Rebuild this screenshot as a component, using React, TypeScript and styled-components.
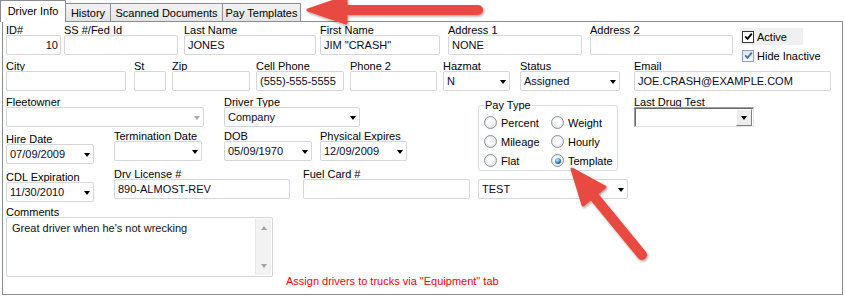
import React from 'react';
import styled, { createGlobalStyle } from 'styled-components';

const GlobalStyle = createGlobalStyle`
  html, body {
    margin: 0;
    padding: 0;
    background: #fff;
  }
  body {
    font-family: "Liberation Sans", Arial, sans-serif;
    font-size: 11px;
    color: #000;
  }
`;

const Screen = styled.div`
  position: relative;
  width: 845px;
  height: 297px;
  overflow: hidden;
  background: #fff;
`;

const TabStrip = styled.div`
  display: flex;
  align-items: flex-end;
  height: 21px;
`;

const Tab = styled.div<{ $active?: boolean; $w: number }>`
  box-sizing: border-box;
  flex: none;
  width: ${(p) => p.$w}px;
  height: ${(p) => (p.$active ? 22 : 18)}px;
  margin-left: ${(p) => (p.$active ? 0 : -1)}px;
  margin-bottom: ${(p) => (p.$active ? -1 : 0)}px;
  position: relative;
  z-index: ${(p) => (p.$active ? 2 : 1)};
  border: 1px solid #898c95;
  border-bottom: none;
  background: ${(p) => (p.$active ? '#fff' : 'linear-gradient(#f3f3f3, #e4e4e4)')};
  display: flex;
  align-items: center;
  justify-content: center;
  padding-bottom: ${(p) => (p.$active ? 2 : 0)}px;
  white-space: nowrap;
`;

const Panel = styled.div`
  box-sizing: border-box;
  margin-left: 2px;
  width: 841px;
  height: 274px;
  border: 1px solid #898c95;
  padding: 1px 0 0 3px;
  display: flex;
  flex-direction: column;
`;

const Row = styled.div<{ $mt?: number; $h?: number }>`
  display: flex;
  align-items: flex-start;
  margin-top: ${(p) => p.$mt ?? 0}px;
  ${(p) => (p.$h ? `height: ${p.$h}px;` : '')}
`;

const Field = styled.div<{ $w: number; $ml: number; $mt: number }>`
  display: flex;
  flex-direction: column;
  flex: none;
  width: ${(p) => p.$w}px;
  margin-left: ${(p) => p.$ml}px;
  margin-top: ${(p) => p.$mt}px;
`;

const Label = styled.div`
  height: 12px;
  line-height: 14px;
  white-space: nowrap;
`;

const Box = styled.div<{ $h?: number }>`
  box-sizing: border-box;
  height: ${(p) => p.$h ?? 20}px;
  border: 1px solid #d3d6da;
  border-radius: 2px;
  background: #fff;
  display: flex;
  align-items: center;
  padding: 0 3px;
  white-space: nowrap;
  overflow: hidden;
`;

const Value = styled.span<{ $right?: boolean }>`
  flex: 1;
  text-align: ${(p) => (p.$right ? 'right' : 'left')};
  color: #0a0a1e;
  margin-right: ${(p) => (p.$right ? -1 : 0)}px;
`;

const Caret = styled.span<{ $disabled?: boolean }>`
  flex: none;
  width: 0;
  height: 0;
  border-left: 3.5px solid transparent;
  border-right: 3.5px solid transparent;
  border-top: 4px solid ${(p) => (p.$disabled ? '#a8a8a8' : '#000')};
  margin-top: 1px;
`;

const CheckStack = styled.div`
  flex: none;
  margin: 5px 0 0 7px;
  display: flex;
  flex-direction: column;
  gap: 2px;
`;

const CheckRow = styled.div<{ $shaded?: boolean }>`
  width: 63px;
  height: 17px;
  display: flex;
  align-items: center;
  gap: 3px;
  padding-left: 2px;
  box-sizing: border-box;
  background: ${(p) => (p.$shaded ? '#f0f0f0' : 'transparent')};
  white-space: nowrap;
`;

const CheckBox = styled.span<{ $soft?: boolean }>`
  box-sizing: border-box;
  width: 12px;
  height: 12px;
  flex: none;
  border: 1px solid ${(p) => (p.$soft ? '#8f9fb6' : '#333')};
  background: ${(p) => (p.$soft ? 'linear-gradient(#dfe6ef, #f4f7fb)' : '#fff')};
  display: flex;
  align-items: center;
  justify-content: center;
`;

const Middle = styled.div`
  display: flex;
  margin-top: 4px;
`;

const LeftCol = styled.div`
  flex: none;
  width: 472px;
  display: flex;
  flex-direction: column;
`;

const PayCol = styled.div`
  flex: none;
  width: 150px;
  display: flex;
  flex-direction: column;
`;

const GroupBox = styled.fieldset`
  box-sizing: border-box;
  width: 140px;
  margin: 4px 0 0;
  padding: 2px 0 0 5px;
  min-width: 0;
  border: 1px solid #d5dce3;
  border-radius: 3px;
`;

const Legend = styled.legend`
  padding: 0 1px;
  margin: 0;
  line-height: 12px;
  font-size: 11px;
`;

const RadioGrid = styled.div`
  display: grid;
  grid-template-columns: 67px auto;
  grid-auto-rows: 19px;
`;

const RadioItem = styled.div`
  display: flex;
  align-items: center;
  gap: 4px;
  white-space: nowrap;
`;

const RadioDot = styled.span<{ $on?: boolean }>`
  box-sizing: border-box;
  width: 13px;
  height: 13px;
  flex: none;
  border-radius: 50%;
  border: 1px solid #8d9095;
  background: radial-gradient(circle at 50% 45%, #fbfbfb 0 35%, #d4d6d9 100%);
  display: flex;
  align-items: center;
  justify-content: center;

  &::after {
    content: '';
    display: ${(p) => (p.$on ? 'block' : 'none')};
    width: 6px;
    height: 6px;
    border-radius: 50%;
    background: radial-gradient(circle at 40% 35%, #a6e0ff 0 15%, #1f73bb 55%, #0c3b6b 100%);
  }
`;

const DrugCol = styled.div`
  flex: none;
  margin-left: 6px;
  display: flex;
  flex-direction: column;
  width: 120px;
`;

const ClassicCombo = styled.div`
  box-sizing: border-box;
  height: 20px;
  border: 1px solid;
  border-color: #a0a0a0 #e3e3e3 #e3e3e3 #a0a0a0;
  box-shadow: inset 1px 1px 0 #696969;
  background: #fff;
  display: flex;
  justify-content: flex-end;
  padding: 1px 1px 0 0;
`;

const ComboButton = styled.div`
  box-sizing: border-box;
  width: 16px;
  height: 17px;
  border: 1px solid;
  border-color: #fff #808080 #808080 #fff;
  background: #ececec;
  display: flex;
  align-items: center;
  justify-content: center;
`;

const Memo = styled(Box)`
  align-items: stretch;
  padding: 0 0 0 5px;
`;

const MemoText = styled.div`
  flex: 1;
  padding-top: 3px;
  line-height: 14px;
  color: #111;
`;

const ScrollTrack = styled.div`
  width: 16px;
  margin: 1px 1px 1px 0;
  background: #f2f2f2;
  border-left: 1px solid #e8e8e8;
  display: flex;
  flex-direction: column;
  align-items: center;
  justify-content: space-between;
  padding: 7px 0 7px;
  box-sizing: border-box;
`;

const ScrollArrow = styled.span<{ $up?: boolean }>`
  width: 0;
  height: 0;
  border-left: 3.5px solid transparent;
  border-right: 3.5px solid transparent;
  ${(p) => (p.$up ? 'border-bottom' : 'border-top')}: 4px solid #a3a3a3;
`;

const Note = styled.div`
  margin: 70px 0 0 13px;
  line-height: 12px;
  color: #ff0000;
  white-space: nowrap;
`;

const Overlay = styled.svg`
  position: absolute;
  left: 0;
  top: 0;
  pointer-events: none;
`;

type FieldProps = {
  label: string;
  w: number;
  ml?: number;
  mt?: number;
  value?: string;
  right?: boolean;
  select?: boolean;
  disabled?: boolean;
};

function Input({ label, w, ml = 0, mt = 0, value, right, select, disabled }: FieldProps) {
  return (
    <Field $w={w} $ml={ml} $mt={mt}>
      <Label>{label}</Label>
      <Box>
        <Value $right={right}>{value}</Value>
        {select && <Caret $disabled={disabled} />}
      </Box>
    </Field>
  );
}

function Tick({ color }: { color: string }) {
  return (
    <svg width="9" height="9" viewBox="0 0 9 9">
      <path d="M1.2 4.4 L3.5 6.8 L7.8 1.6" fill="none" stroke={color} strokeWidth="1.8" />
    </svg>
  );
}

const payTypes: [string, boolean][] = [
  ['Percent', false],
  ['Weight', false],
  ['Mileage', false],
  ['Hourly', false],
  ['Flat', false],
  ['Template', true],
];

export default function App() {
  return (
    <>
      <GlobalStyle />
      <Screen>
        <TabStrip>
          <Tab $active $w={66}>Driver Info</Tab>
          <Tab $w={46}>History</Tab>
          <Tab $w={113}>Scanned Documents</Tab>
          <Tab $w={79}>Pay Templates</Tab>
        </TabStrip>
        <Panel>
          <Row $h={32}>
            <Input label="ID#" w={55} value="10" right />
            <Input label="SS #/Fed Id" w={114} ml={3} />
            <Input label="Last Name" w={132} ml={6} value="JONES" />
            <Input label="First Name" w={120} ml={4} value={'JIM "CRASH"'} />
            <Input label="Address 1" w={134} ml={8} value="NONE" />
            <Input label="Address 2" w={143} ml={8} />
            <CheckStack>
              <CheckRow $shaded>
                <CheckBox>
                  <Tick color="#000" />
                </CheckBox>
                Active
              </CheckRow>
              <CheckRow>
                <CheckBox $soft>
                  <Tick color="#4c6fa8" />
                </CheckBox>
                Hide Inactive
              </CheckRow>
            </CheckStack>
          </Row>
          <Row $mt={4}>
            <Input label="City" w={120} />
            <Input label="St" w={32} ml={8} />
            <Input label="Zip" w={78} ml={6} />
            <Input label="Cell Phone" w={88} ml={6} value="(555)-555-5555" />
            <Input label="Phone 2" w={87} ml={6} />
            <Input label="Hazmat" w={67} ml={6} value="N" select />
            <Input label="Status" w={100} ml={10} value="Assigned" select />
            <Input label="Email" w={197} ml={14} value="JOE.CRASH@EXAMPLE.COM" />
          </Row>
          <Middle>
            <LeftCol>
              <Row>
                <Input label="Fleetowner" w={198} select disabled />
                <Input label="Driver Type" w={136} ml={20} value="Company" select />
              </Row>
              <Row $mt={2}>
                <Input label="Hire Date" w={88} mt={3} value="07/09/2009" select />
                <Input label="Termination Date" w={88} ml={20} select />
                <Input label="DOB" w={88} ml={22} value="05/09/1970" select />
                <Input label="Physical Expires" w={87} ml={8} value="12/09/2009" select />
              </Row>
              <Row $mt={3}>
                <Input label="CDL Expiration" w={88} mt={3} value="11/30/2010" select />
                <Input label="Drv License #" w={176} ml={20} value="890-ALMOST-REV" />
                <Input label="Fuel Card #" w={167} ml={13} />
              </Row>
            </LeftCol>
            <PayCol>
              <GroupBox>
                <Legend>Pay Type</Legend>
                <RadioGrid>
                  {payTypes.map(([name, on]) => (
                    <RadioItem key={name}>
                      <RadioDot $on={on} />
                      {name}
                    </RadioItem>
                  ))}
                </RadioGrid>
              </GroupBox>
              <Field $w={150} $ml={0} $mt={8}>
                <Box>
                  <Value>TEST</Value>
                  <Caret />
                </Box>
              </Field>
            </PayCol>
            <DrugCol>
              <Label>Last Drug Test</Label>
              <ClassicCombo>
                <ComboButton>
                  <Caret />
                </ComboButton>
              </ClassicCombo>
            </DrugCol>
          </Middle>
          <Row $mt={3}>
            <Field $w={267} $ml={0} $mt={0}>
              <Label>Comments</Label>
              <Memo $h={60}>
                <MemoText>Great driver when he's not wrecking</MemoText>
                <ScrollTrack>
                  <ScrollArrow $up />
                  <ScrollArrow />
                </ScrollTrack>
              </Memo>
            </Field>
            <Note>Assign drivers to trucks via "Equipment" tab</Note>
          </Row>
        </Panel>
        <Overlay width="845" height="297" viewBox="0 0 845 297">
          <defs>
            <filter id="arrowShadow" x="-20%" y="-40%" width="140%" height="180%">
              <feDropShadow dx="1" dy="1.5" stdDeviation="1.2" floodColor="#000" floodOpacity="0.35" />
            </filter>
          </defs>
          <g filter="url(#arrowShadow)" fill="#e8493f" stroke="#e8493f" strokeLinejoin="round">
            <line x1="478" y1="10" x2="340" y2="10" strokeWidth="10" strokeLinecap="round" />
            <polygon points="308,10 346,-3 346,23" strokeWidth="3" />
            <line x1="642" y1="255" x2="592" y2="194" strokeWidth="10" strokeLinecap="round" />
            <polygon points="572,169 583,205 605,187" strokeWidth="3" />
          </g>
        </Overlay>
      </Screen>
    </>
  );
}
